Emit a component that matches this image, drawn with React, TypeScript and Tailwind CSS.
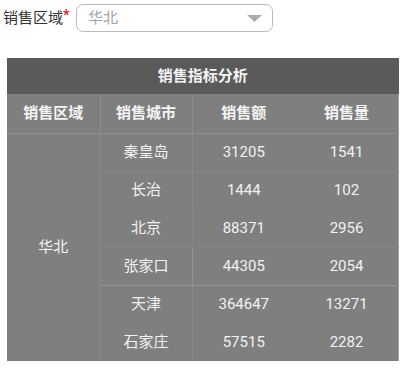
import React from "react";

const rows = [
  { city: "秦皇岛", amount: 31205, qty: 1541, line: "border-b border-[#888888]" },
  { city: "长治", amount: 1444, qty: 102, line: "" },
  { city: "北京", amount: 88371, qty: 2956, line: "border-b border-[#858585]" },
  { city: "张家口", amount: 44305, qty: 2054, line: "border-b border-[#939393]" },
  { city: "天津", amount: 364647, qty: 13271, line: "" },
  { city: "石家庄", amount: 57515, qty: 2282, line: "" },
];

export default function App() {
  return (
    <div className="min-h-screen bg-white font-['Roboto','Noto_Sans_CJK_SC',sans-serif]">
      {/* Region filter */}
      <div className="flex items-center pt-1 pl-[3px]">
        <span className="text-[15px] leading-none text-[#333333]">销售区域</span>
        <span className="mb-[7px] w-[7px] text-[14px] font-bold leading-none text-[#e02020]">*</span>
        <div className="ml-[6px] flex h-[28px] w-[197px] items-center justify-between rounded-[7px] border border-[#bbbbbb] pl-[11px] pr-[10px]">
          <span className="text-[15px] leading-none text-[#a4a4a4]">华北</span>
          <svg width="15" height="7" viewBox="0 0 15 7">
            <path d="M0 0 H15 L7.5 7 Z" fill="#adadad" />
          </svg>
        </div>
      </div>

      {/* Sales table */}
      <table className="mt-[26px] ml-[7px] w-[392px] border-collapse text-center text-[15px]">
        <thead>
          <tr className="h-[36px] bg-[#5a5a5a]">
            <th colSpan={4} className="font-bold text-[#f4f4f4]">
              销售指标分析
            </th>
          </tr>
          <tr className="h-[39px] bg-[#7f7f7f] font-bold text-[#f4f4f4]">
            <th className="w-[93px] border-r border-b border-[#8f8f8f]">销售区域</th>
            <th className="w-[92px] border-r border-b border-[#8f8f8f]">销售城市</th>
            <th className="w-[103px] border-b border-[#8f8f8f]">销售额</th>
            <th className="border-b border-r border-[#8f8f8f] border-r-[#a8a8a8]">销售量</th>
          </tr>
        </thead>
        <tbody className="bg-[#7f7f7f] text-[#f2f2f2]">
          {rows.map((r, i) => (
            <tr key={r.city} className="h-[38px]">
              {i === 0 && (
                <td rowSpan={6} className="border-r border-[#8a8a8a] text-[#f4f4f4]">
                  华北
                </td>
              )}
              <td className={`border-r border-[#8a8a8a] ${r.line}`}>{r.city}</td>
              <td className={r.line}>{r.amount}</td>
              <td className={`border-r border-r-[#a8a8a8] ${r.line}`}>{r.qty}</td>
            </tr>
          ))}
        </tbody>
      </table>
    </div>
  );
}
